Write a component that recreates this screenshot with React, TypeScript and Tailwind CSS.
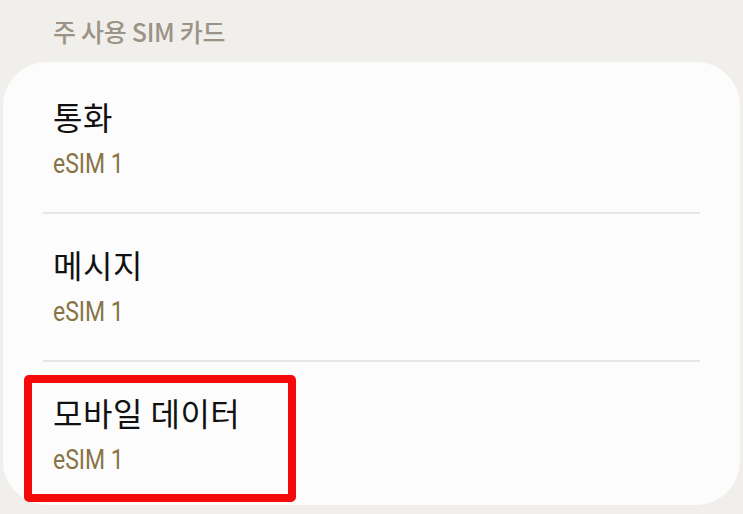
const rows = [
  { title: '통화', value: 'eSIM 1' },
  { title: '메시지', value: 'eSIM 1' },
  { title: '모바일 데이터', value: 'eSIM 1', marked: true },
]

const kr = { fontFamily: '"Noto Sans CJK KR", "Noto Sans", sans-serif' }
const latin = { fontFamily: 'Roboto, "Noto Sans CJK KR", sans-serif' }

export default function App() {
  return (
    <div className="h-[514px] w-[743px] overflow-hidden bg-[#f1efeb]">
      {/* section header */}
      <div className="flex h-[62px] items-start px-[53px] pt-[14px]">
        <span
          className="text-[25px] font-medium leading-[34px] tracking-[-0.3px] text-[#9b9385]"
          style={kr}
        >
          주 사용 SIM 카드
        </span>
      </div>

      {/* card */}
      <div className="mx-[3px] rounded-[44px] bg-[#fcfcfc] pt-[4px]">
        {rows.map((row, i) => (
          <div key={row.title}>
            {i > 0 && <div className="mx-[40px] h-[2px] bg-[#e7e7e7]" />}
            <div
              className={`relative px-[50px] pt-[30px] ${
                i === rows.length - 1 ? 'pb-[29px]' : 'pb-[32px]'
              }`}
            >
              <div
                className="text-[32px] leading-[40px] tracking-[0.5px] text-[#111111]"
                style={kr}
              >
                {row.title}
              </div>
              <div className="mt-[12px] h-[32px]">
                <span
                  className="inline-block origin-left scale-x-[0.82] text-[28px] leading-[32px] text-[#877445]"
                  style={latin}
                >
                  {row.value}
                </span>
              </div>
              {row.marked && (
                <div className="absolute left-[21px] top-[13px] h-[127px] w-[272px] rounded-[5px] border-[8px] border-[#f50a0a]" />
              )}
            </div>
          </div>
        ))}
      </div>
    </div>
  )
}
